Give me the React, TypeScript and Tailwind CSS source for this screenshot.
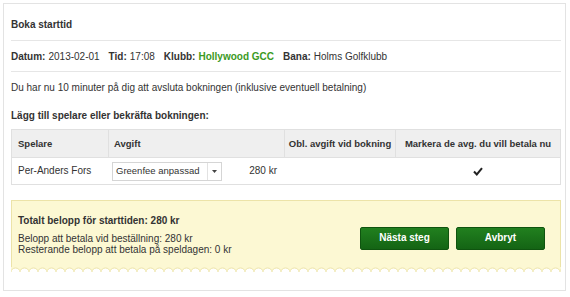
import React from "react";

const Wave = () => (
  <svg className="block w-full h-[6px]" preserveAspectRatio="none" height="6">
    <defs>
      <pattern id="scallop" width="9" height="6" patternUnits="userSpaceOnUse">
        <path d="M0 0 L9 0 L9 5 A4.5 4 0 0 0 0 5 Z" fill="#fcf8d3" />
        <path d="M9 5 A4.5 4 0 0 0 0 5" fill="none" stroke="#ece3a8" strokeWidth="1" />
      </pattern>
    </defs>
    <rect x="0" y="0" width="100%" height="6" fill="url(#scallop)" />
  </svg>
);

export default function App() {
  return (
    <div className="w-[570px] h-[297px] bg-white text-[#333] text-[10px] leading-[12px] whitespace-nowrap" style={{ fontFamily: '"Liberation Sans", Arial, sans-serif' }}>
      <div className="ml-[3px] mt-[3px] w-[563px] h-[288px] border border-[#e3e3e3] pl-[7px] pr-[4px]">
        <div className="h-[37px] flex items-end pb-[9px] border-b border-[#e6e6e6]">
          <span className="font-bold">Boka starttid</span>
        </div>
        <div className="h-[31px] flex items-center pt-[1px] border-b border-[#e6e6e6]">
          <span className="font-bold">Datum:</span>
          <span className="ml-[3px]">2013-02-01</span>
          <span className="font-bold ml-[9px]">Tid:</span>
          <span className="ml-[3px]">17:08</span>
          <span className="font-bold ml-[9px]">Klubb:</span>
          <span className="ml-[3px] font-bold text-[#3b9a23]">Hollywood GCC</span>
          <span className="font-bold ml-[9px]">Bana:</span>
          <span className="ml-[3px]">Holms Golfklubb</span>
        </div>
        <div className="h-[31px] flex items-center">
          Du har nu 10 minuter på dig att avsluta bokningen (inklusive eventuell betalning)
        </div>
        <div className="h-[26px] flex items-center font-bold">
          Lägg till spelare eller bekräfta bokningen:
        </div>
        <div className="border border-[#e0e0e0]">
          <div className="flex h-[28px] bg-[#efefef] font-bold text-[9.5px] border-b border-[#e0e0e0]">
            <div className="w-[97px] flex items-center pl-[6px] border-r border-[#e0e0e0]">Spelare</div>
            <div className="w-[176px] flex items-center pl-[5px] border-r border-[#e0e0e0]">Avgift</div>
            <div className="w-[111px] flex items-center justify-center border-r border-[#e0e0e0]">Obl. avgift vid bokning</div>
            <div className="flex-1 flex items-center justify-center">Markera de avg. du vill betala nu</div>
          </div>
          <div className="flex h-[26px] items-center">
            <div className="w-[97px] pl-[6px]">Per-Anders Fors</div>
            <div className="w-[176px] flex items-center pl-[3px]">
              <div className="w-[110px] h-[19px] border border-[#d5d5d5] flex items-center bg-white">
                <span className="flex-1 pl-[3px] text-[9.5px]">Greenfee anpassad</span>
                <span className="w-[14px] h-full border-l border-[#e2e2e2] flex items-center justify-center">
                  <svg width="5" height="3" viewBox="0 0 5 3"><path d="M0 0 L5 0 L2.5 3 Z" fill="#444" /></svg>
                </span>
              </div>
              <span className="ml-auto mr-[8px]">280 kr</span>
            </div>
            <div className="w-[111px]"></div>
            <div className="flex-1 flex justify-center">
              <svg width="10" height="9" viewBox="0 0 10 9">
                <path d="M1 4.5 L3.8 7.5 L9 1.2" fill="none" stroke="#222" strokeWidth="2" />
              </svg>
            </div>
          </div>
        </div>
        <div className="mt-[15px]">
          <div className="bg-[#fcf8d3] border border-b-0 border-[#ece3a8] h-[67px] flex items-center pl-[6px] pr-[15px]">
            <div className="flex-1 mt-[2px]">
              <div className="font-bold">Totalt belopp för starttiden: 280 kr</div>
              <div className="mt-[6px] leading-[11px]">Belopp att betala vid beställning: 280 kr</div>
              <div className="leading-[11px]">Resterande belopp att betala på speldagen: 0 kr</div>
            </div>
            <div className="flex gap-[7px] mt-[8px]">
              <button className="w-[89px] h-[23px] rounded-[2px] bg-gradient-to-b from-[#21801f] to-[#146414] text-white font-bold text-[10px] border border-[#0f540f]">Nästa steg</button>
              <button className="w-[89px] h-[23px] rounded-[2px] bg-gradient-to-b from-[#21801f] to-[#146414] text-white font-bold text-[10px] border border-[#0f540f]">Avbryt</button>
            </div>
          </div>
          <Wave />
        </div>
      </div>
    </div>
  );
}
